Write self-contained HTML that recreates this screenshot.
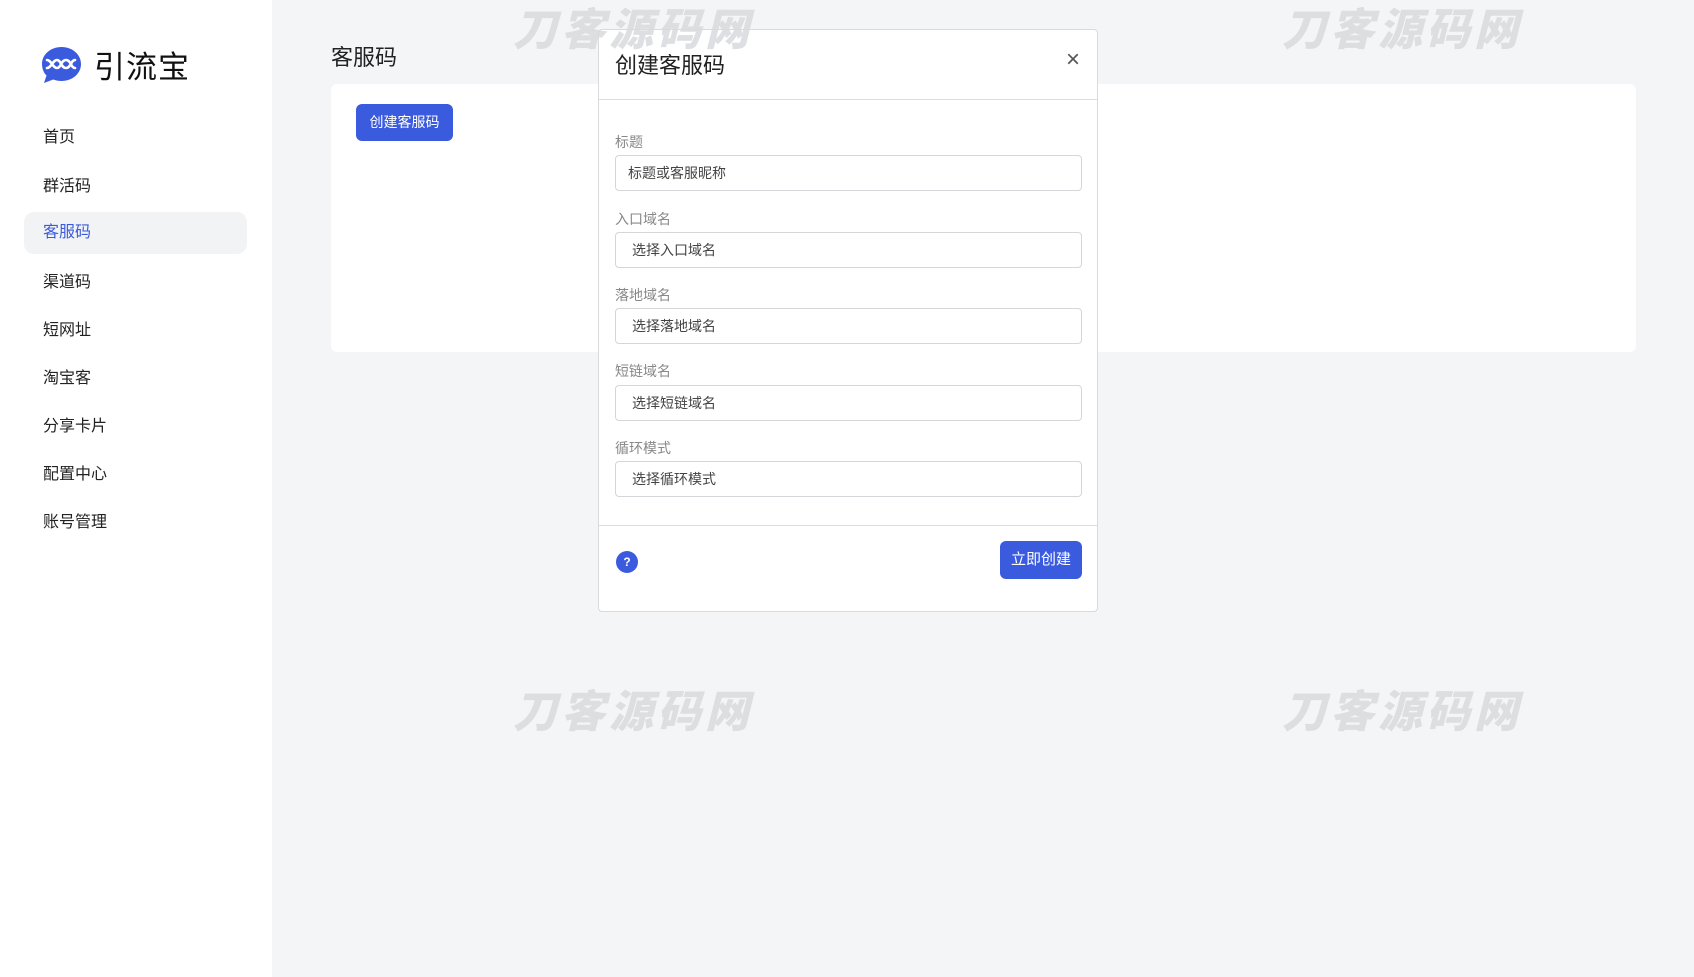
<!DOCTYPE html>
<html><head><meta charset="utf-8"><style>
*{box-sizing:border-box;margin:0;padding:0}
body{width:1694px;height:977px;overflow:hidden;background:#f4f5f7;font-family:"Liberation Sans","Noto Sans CJK SC",sans-serif;position:relative;color:#222}
.side{position:absolute;left:0;top:0;width:272px;height:977px;background:#fff}
.logo{position:absolute;left:41px;top:42px;display:flex;align-items:center}
.logo span{font-size:31px;margin-left:12px;color:#111;letter-spacing:1px}
.nav div{position:absolute;left:24px;width:223px;height:42px;line-height:42px;padding-left:19px;font-size:16px;color:#222;border-radius:10px}
.nav .act{background:#f2f3f5;color:#3b5bdb}
.title{position:absolute;left:331px;top:40px;font-size:22px;color:#222}
.card{position:absolute;left:331px;top:84px;width:1305px;height:268px;background:#fff;border-radius:6px}
.btn{position:absolute;background:#3b5bdf;color:#fff;border-radius:6px;font-size:14px;text-align:center}
.wm{position:absolute;font-size:44px;font-weight:900;font-style:italic;color:#d9dadd;letter-spacing:4px;z-index:5;opacity:.85;line-height:50px}
.modal{position:absolute;left:598px;top:29px;width:500px;height:583px;background:#fff;border:1px solid #d9dadd;border-radius:4px}
.mh{height:70px;border-bottom:1px solid #dcdde0;position:relative}
.mh .t{position:absolute;left:16px;top:18px;font-size:22px;color:#222}
.mh .x{position:absolute;right:17px;top:16px;font-size:24px;color:#555}
.lab{position:absolute;left:16px;font-size:14px;color:#888}
.inp{position:absolute;left:16px;width:467px;height:36px;border:1px solid #d4d6da;border-radius:4px;font-size:14px;color:#444;line-height:34px;padding-left:16px}
.foot{position:absolute;left:0;top:495px;width:498px;border-top:1px solid #dcdde0}
.help{position:absolute;left:17px;top:521px;width:22px;height:22px;border-radius:50%;background:#3b5bdf;color:#fff;font-size:12px;font-weight:bold;text-align:center;line-height:22px}
</style></head><body>
<div class="side">
 <div class="logo"><svg width="41" height="38" viewBox="0 0 41 38"><path d="M20.5 1C31.5 1 40 8.5 40 18s-8.5 17-19.5 17c-3 0-5.8-.5-8.3-1.5L3 37l2.5-7.5C2.5 26.5 1 22.5 1 18 1 8.5 9.5 1 20.5 1z" fill="#3b5bdf"/><path d="M6 14c4 0 6 8 10 8s4-8 9-8 5 8 9 8M6 22c4 0 6-8 10-8s4 8 9 8 5-8 9-8" stroke="#fff" stroke-width="2.6" fill="none" stroke-linecap="round"/></svg><span>引流宝</span></div>
 <div class="nav">
  <div style="top:117px">首页</div>
  <div style="top:166px">群活码</div>
  <div class="act" style="top:212px">客服码</div>
  <div style="top:262px">渠道码</div>
  <div style="top:310px">短网址</div>
  <div style="top:358px">淘宝客</div>
  <div style="top:406px">分享卡片</div>
  <div style="top:454px">配置中心</div>
  <div style="top:502px">账号管理</div>
 </div>
</div>
<div class="title">客服码</div>
<div class="card"></div>
<div class="btn" style="left:356px;top:104px;width:97px;height:37px;line-height:37px">创建客服码</div>
<div class="wm" style="left:513px;top:6px">刀客源码网</div>
<div class="wm" style="left:1282px;top:6px">刀客源码网</div>
<div class="wm" style="left:513px;top:688px">刀客源码网</div>
<div class="wm" style="left:1282px;top:688px">刀客源码网</div>
<div class="modal">
 <div class="mh"><div class="t">创建客服码</div><div class="x">×</div></div>
 <div class="lab" style="top:102px">标题</div>
 <div class="inp" style="top:125px;padding-left:12px">标题或客服昵称</div>
 <div class="lab" style="top:179px">入口域名</div>
 <div class="inp" style="top:202px">选择入口域名</div>
 <div class="lab" style="top:255px">落地域名</div>
 <div class="inp" style="top:278px">选择落地域名</div>
 <div class="lab" style="top:331px">短链域名</div>
 <div class="inp" style="top:355px">选择短链域名</div>
 <div class="lab" style="top:408px">循环模式</div>
 <div class="inp" style="top:431px">选择循环模式</div>
 <div class="foot"></div>
 <div class="help">?</div>
 <div class="btn" style="left:401px;top:511px;width:82px;height:38px;line-height:38px;font-size:15px">立即创建</div>
</div>
</body></html>
